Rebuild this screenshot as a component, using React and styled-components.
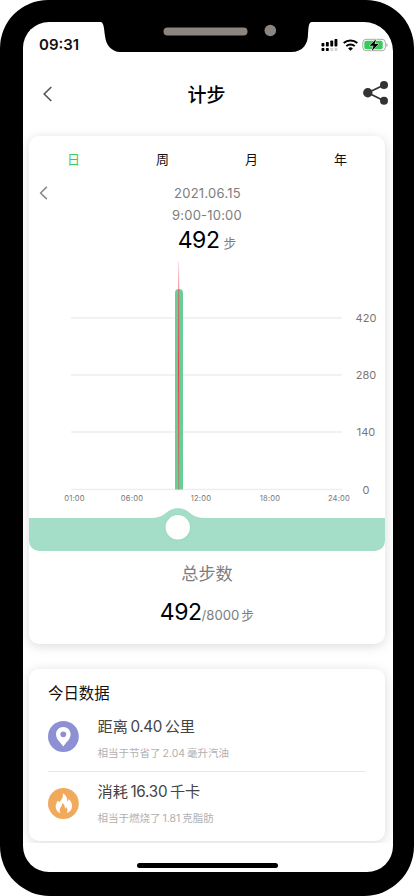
import React from 'react';
import styled, { createGlobalStyle } from 'styled-components';

const GlobalStyle = createGlobalStyle`
  * {
    box-sizing: border-box;
  }

  body {
    margin: 0;
    background-color: #fff;
    font-family: Inter, "Noto Sans CJK SC", sans-serif;
    color: #111;
  }

  svg {
    display: block;
  }
`;

const Phone = styled.div`
  width: 414px;
  height: 896px;
  padding: 22px 21px 24px 23px;
  background-color: #000;
  border-radius: 48px 48px 50px 50px;
  overflow: hidden;
`;

const Screen = styled.div`
  position: relative;
  display: flex;
  flex-direction: column;
  height: 850px;
  background-color: #fff;
  border-radius: 26px 29px 26px 26px;
  overflow: hidden;
`;

const Notch = styled.svg`
  position: absolute;
  top: 0;
  left: 77px;
`;

const StatusBar = styled.div`
  display: flex;
  align-items: center;
  justify-content: space-between;
  height: 46px;
  padding: 0 5px 0 16px;
`;

const Time = styled.span`
  font-size: 15px;
  font-weight: 600;
  line-height: 18px;
`;

const NavBar = styled.header`
  display: grid;
  grid-template-columns: 60px 1fr 60px;
  align-items: center;
  height: 52px;
  padding: 0 3px 0 0;
`;

const NavSlot = styled.div`
  display: flex;
  justify-content: ${({ $end }) => ($end ? 'flex-end' : 'flex-start')};
  padding-left: ${({ $end }) => ($end ? 0 : 20)}px;
  padding-right: ${({ $end }) => ($end ? 1 : 0)}px;
`;

const Title = styled.h1`
  margin: 4px 0 0;
  font-size: 19px;
  font-weight: 500;
  line-height: 26px;
  text-align: center;
  color: #000;
`;

const Content = styled.main`
  display: flex;
  flex-direction: column;
  gap: 25px;
  height: 723px;
  padding: 16px 8px 0 6px;
  overflow: hidden;
`;

const Card = styled.section`
  flex: none;
  height: ${({ $height }) => $height}px;
  background-color: #fff;
  border-radius: 10px;
  box-shadow: 0 2px 12px rgba(0, 0, 0, 0.15);
`;

const Tabs = styled.nav`
  display: grid;
  grid-template-columns: repeat(4, 1fr);
  padding-top: 13px;
`;

const Tab = styled.button`
  height: 20px;
  padding: 0;
  border: none;
  background: none;
  font-family: inherit;
  font-size: 13px;
  line-height: 20px;
  color: ${({ $active }) => ($active ? '#3ccb5f' : '#111')};
`;

const DateRow = styled.div`
  display: grid;
  grid-template-columns: 30px 1fr 30px;
  align-items: center;
  height: 22px;
  margin-top: 13px;
  padding-left: 10px;
  padding-right: 9px;
`;

const Muted = styled.div`
  font-size: ${({ $size }) => $size || 13}px;
  line-height: 22px;
  letter-spacing: ${({ $spacing }) => $spacing || 0}px;
  text-align: center;
  color: #7d7d7d;
`;

const Steps = styled.div`
  display: flex;
  align-items: baseline;
  justify-content: center;
  height: 28px;
  line-height: 28px;
`;

const StepCount = styled.span`
  font-size: 23px;
  letter-spacing: -0.5px;
  color: #000;
`;

const StepUnit = styled.span`
  margin-left: ${({ $gap }) => $gap || 0}px;
  font-size: ${({ $size }) => $size || 12.8}px;
  color: #7d7d7d;
`;

const Chart = styled.svg`
  font-family: Inter, sans-serif;
  fill: #777;
`;

const Total = styled.div`
  display: flex;
  flex-direction: column;
  gap: 13px;
  padding-top: 12px;
`;

const DataTitle = styled.h2`
  margin: 0;
  padding: 14px 0 0 19px;
  font-size: 15.4px;
  font-weight: 400;
  line-height: 22px;
`;

const DataList = styled.div`
  padding: 0 19px;
`;

const DataRow = styled.div`
  display: flex;
  gap: 18.5px;
  height: ${({ $height }) => $height}px;
  padding-top: ${({ $top }) => $top}px;
  border-top: ${({ $divided }) => ($divided ? '1px solid #e9e9e9' : 'none')};
`;

const IconSlot = styled.div`
  padding-top: ${({ $top }) => $top}px;
`;

const DataValue = styled.div`
  font-size: 15.2px;
  line-height: 22px;
  color: #444;
`;

const DataNote = styled.div`
  margin-top: 8px;
  font-size: 10.5px;
  line-height: 16px;
  color: #b0b0b0;
`;

const Num = styled.span`
  margin: 0 ${({ $gap }) => $gap}px;
  letter-spacing: ${({ $spacing }) => $spacing || 0}px;
`;

const HomeIndicator = styled.div`
  width: 141px;
  height: 5px;
  margin: 20px 0 0 114px;
  border-radius: 3px;
  background-color: #000;
`;

const BackIcon = ({ width, height, color, strokeWidth }) => (
  <svg
    width={width}
    height={height}
    viewBox="0 0 9 16"
    fill="none"
    stroke={color}
    strokeWidth={strokeWidth}
  >
    <path d="M8.3 1 1.2 8l7.1 7" />
  </svg>
);

const StatusGlyphs = () => (
  <svg width="67" height="14" viewBox="0 0 67 14">
    <g fill="#000">
      <rect x="0.5" y="5" width="2.9" height="3.5" rx="0.8" />
      <rect x="4.9" y="3.9" width="2.9" height="4.6" rx="0.8" />
      <rect x="9.3" y="2.5" width="2.9" height="6" rx="0.8" />
      <rect x="13.5" y="1" width="2.9" height="7.5" rx="0.8" />
      <rect x="0.5" y="10" width="2.9" height="3" rx="0.8" />
      <rect x="4.9" y="10" width="2.9" height="3" rx="0.8" />
    </g>
    <g fill="#d3d3d3">
      <rect x="9.3" y="10" width="2.9" height="3" rx="0.8" />
      <rect x="13.5" y="10" width="2.9" height="3" rx="0.8" />
    </g>
    <g fill="none" stroke="#000" strokeWidth="2">
      <path d="M22.7 5.1a10 10 0 0 1 13.6 0" />
      <path d="M25.3 8.1a6 6 0 0 1 8.4 0" />
    </g>
    <path d="M27.1 10.4a3.5 3.5 0 0 1 4.8 0L29.5 12.8z" fill="#000" />
    <rect x="41.8" y="1.3" width="22.6" height="11.4" rx="3.4" fill="#fff" stroke="#a8a8a8" />
    <rect x="43.3" y="2.8" width="18.4" height="8.4" rx="2" fill="#35cb5b" />
    <path d="M65.4 5.2c1.6.4 1.6 3.2 0 3.6z" fill="#a8a8a8" />
    <path
      d="M55.2.9 48.6 7.800h4L50.6 13.2 57.600 6.100h-4z"
      fill="#000"
      stroke="#fff"
      strokeWidth="1"
      paintOrder="stroke"
    />
  </svg>
);

const ShareIcon = () => (
  <svg width="26" height="26" viewBox="0 0 26 26" fill="#333">
    <path d="M21 3.9 4.8 11.7 21 19.8" fill="none" stroke="#333" strokeWidth="1.7" />
    <circle cx="4.8" cy="11.7" r="4.7" />
    <circle cx="21" cy="4" r="4" />
    <circle cx="21" cy="19.8" r="4" />
  </svg>
);

const PinIcon = () => (
  <svg width="31" height="31" viewBox="0 0 31 31">
    <circle cx="15.4" cy="15.5" r="15.4" fill="#8d90d3" />
    <path
      d="M15.3 6c-4.1 0-7.3 3.2-7.3 7.2 0 4.9 4.5 8.2 7.3 12.2 2.8-4 7.3-7.3 7.3-12.2 0-4-3.2-7.2-7.3-7.2z"
      fill="#fff"
    />
    <circle cx="15.3" cy="13.3" r="2.9" fill="#8d90d3" />
  </svg>
);

const FireIcon = () => (
  <svg width="31" height="31" viewBox="0 0 31 31">
    <circle cx="15.4" cy="15.5" r="15.4" fill="#f1aa5c" />
    <path
      d="M14.9 5.2c3.6 2.2 4.6 5 4.3 8.3.9-.5 1.3-1.4 1.5-2.4 2.7 2.6 4 5.8 3.1 9-.7 2.5-2.5 4.200-5.100 5.100 1.300-2.300.9-4.700-.4-6.500-.2 1-.6 1.700-1.300 2.100.1-2.800-.8-4.700-2.800-6.100.2 3.400-2.500 4.700-2.600 7.600 0 1.100.3 2.100.9 3-2.900-1-4.900-3.600-4.800-6.700 0-2.700 1.400-4.400 2.300-6.200.6.600.9 1.200 1 2 2.600-2.200 4.500-5.400 3.900-9.200z"
      fill="#fff"
    />
  </svg>
);

const yTicks = [
  { label: '420', y: 64 },
  { label: '280', y: 121 },
  { label: '140', y: 178 },
  { label: '0', y: 235.5 },
];

const xTicks = [
  { label: '01:00', x: 45.5 },
  { label: '06:00', x: 103 },
  { label: '12:00', x: 172 },
  { label: '18:00', x: 241 },
  { label: '24:00', x: 310 },
];

const StepChart = () => (
  <Chart width="356" height="297" viewBox="0 0 356 297">
    <defs>
      <linearGradient id="cursor" x1="0" y1="0" x2="0" y2="1">
        <stop offset="0" stopColor="#f2525e" stopOpacity="0.15" />
        <stop offset="0.15" stopColor="#f2525e" stopOpacity="0.7" />
        <stop offset="0.45" stopColor="#f2404c" />
        <stop offset="0.75" stopColor="#dd6058" />
        <stop offset="1" stopColor="#9b9a76" />
      </linearGradient>
      <filter id="knobShadow" x="-30%" y="-30%" width="160%" height="160%">
        <feDropShadow dx="0" dy="0.3" stdDeviation="1.2" floodColor="#2b8a66" floodOpacity="0.18" />
      </filter>
    </defs>
    {yTicks.map(({ label, y }) => (
      <g key={label}>
        <path d={`M42 ${y}H313`} stroke="#eeeeee" strokeWidth="1.6" />
        <text x="337" y={y + 4} fontSize="11" textAnchor="middle">
          {label}
        </text>
      </g>
    ))}
    <path d="M146 235.5V39a3.500 3.500 0 0 1 8 0V235.5z" fill="#69cd97" />
    <rect x="149" y="7.5" width="1.2" height="228" fill="url(#cursor)" />
    {xTicks.map(({ label, x }) => (
      <text key={label} x={x} y="247.2" fontSize="7.6" letterSpacing="0.2" textAnchor="middle">
        {label}
      </text>
    ))}
    <path
      d="M0 264H123C137 264 137 254.300 149 254.300S161 264 175 264H356V287a10 10 0 0 1-10 10H10a10 10 0 0 1-10-10z"
      fill="#a5dec8"
    />
    <circle cx="148.800" cy="273.300" r="12.200" fill="#fff" filter="url(#knobShadow)" />
  </Chart>
);

const App = () => {
  return (
    <>
      <GlobalStyle />
      <Phone>
        <Screen>
          <Notch width="216" height="31" viewBox="0 0 216 31">
            <path
              d="M0 0H1C4 1 4 7 5 14C6 23 11 29 19 30H191C203 30 208 22 208 12C208.5 5 208.5 0 212 0z"
              fill="#000"
            />
            <rect x="63.5" y="5.5" width="84" height="8" rx="4" fill="#8b847f" />
            <circle cx="170.3" cy="8.5" r="5.8" fill="#8b847f" />
          </Notch>
          <StatusBar>
            <Time>09:31</Time>
            <StatusGlyphs />
          </StatusBar>
          <NavBar>
            <NavSlot>
              <BackIcon width={9} height={16} color="#555" strokeWidth={1.6} />
            </NavSlot>
            <Title>计步</Title>
            <NavSlot $end>
              <ShareIcon />
            </NavSlot>
          </NavBar>
          <Content>
            <Card $height={508}>
              <Tabs>
                <Tab $active>日</Tab>
                <Tab>周</Tab>
                <Tab>月</Tab>
                <Tab>年</Tab>
              </Tabs>
              <DateRow>
                <BackIcon width={9} height={14} color="#888" strokeWidth={1.7} />
                <Muted $spacing={0.25}>2021.06.15</Muted>
              </DateRow>
              <Muted $spacing={0.2}>9:00-10:00</Muted>
              <Steps>
                <StepCount>492</StepCount>
                <StepUnit $gap={4}>步</StepUnit>
              </Steps>
              <StepChart />
              <Total>
                <Muted $size={17.2}>总步数</Muted>
                <Steps>
                  <StepCount>492</StepCount>
                  <StepUnit $size={13.2}>/8000</StepUnit>
                  <StepUnit $gap={2}>步</StepUnit>
                </Steps>
              </Total>
            </Card>
            <Card $height={172}>
              <DataTitle>今日数据</DataTitle>
              <DataList>
                <DataRow $height={66} $top={11}>
                  <IconSlot $top={4.5}>
                    <PinIcon />
                  </IconSlot>
                  <div>
                    <DataValue>
                      距离<Num $gap={2.5} $spacing={-0.3}>0.40</Num>公里
                    </DataValue>
                    <DataNote>
                      相当于节省了<Num $gap={2}>2.04</Num>毫升汽油
                    </DataNote>
                  </div>
                </DataRow>
                <DataRow $height={64} $top={9} $divided>
                  <IconSlot $top={6.5}>
                    <FireIcon />
                  </IconSlot>
                  <div>
                    <DataValue>
                      消耗<Num $gap={2.5} $spacing={-0.2}>16.30</Num>千卡
                    </DataValue>
                    <DataNote>
                      相当于燃烧了<Num $gap={2}>1.81</Num>克脂肪
                    </DataNote>
                  </div>
                </DataRow>
              </DataList>
            </Card>
          </Content>
          <HomeIndicator />
        </Screen>
      </Phone>
    </>
  );
};

export default App;
